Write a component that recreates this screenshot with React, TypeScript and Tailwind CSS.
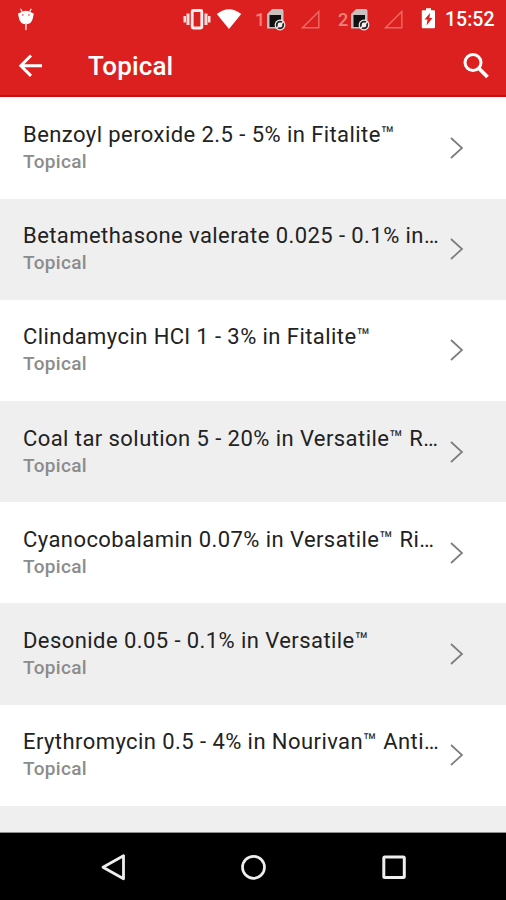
const items = [
  'Benzoyl peroxide 2.5 - 5% in Fitalite™',
  'Betamethasone valerate 0.025 - 0.1% in…',
  'Clindamycin HCl 1 - 3% in Fitalite™',
  'Coal tar solution 5 - 20% in Versatile™ R…',
  'Cyanocobalamin 0.07% in Versatile™ Ri…',
  'Desonide 0.05 - 0.1% in Versatile™',
  'Erythromycin 0.5 - 4% in Nourivan™ Anti…',
];

function DebugIcon() {
  return (
    <svg className="ml-[17px] h-[24px] w-[18px]" viewBox="0 0 18 24" fill="none">
      <path d="M3.800 2.200 5 4.500M14 2.200 12.800 4.500" stroke="#fff" strokeWidth="1.200" strokeLinecap="round" />
      <path d="M1 6.500 3.500 5.500Q8.900 1.800 14.300 5.500L16.800 6.500 16 10.500Q15 17.200 8.900 17.200 2.800 17.200 1.800 10.500Z" fill="#fff" />
      <path d="M8.900 16V22.500" stroke="#ffd9d6" strokeWidth="1.600" strokeLinecap="round" />
      <circle cx="5.800" cy="7.900" r=".9" fill="#e56a66" />
      <circle cx="12" cy="7.900" r=".9" fill="#e56a66" />
    </svg>
  );
}

function VibrateIcon() {
  return (
    <svg className="h-[24px] w-[28px]" viewBox="0 0 28 24" fill="#fff">
      <path d="M.500 9h2.500v6.500H.5zM3.500 6.500h3v11.500h-3zM21.500 6.500h3v11.500h-3zM25 9h2.500v6.500H25z" opacity=".85" />
      <rect x="9.200" y="3.500" width="9.600" height="17.500" rx="1" fill="none" stroke="#fff" strokeOpacity=".93" strokeWidth="2.800" />
    </svg>
  );
}

function WifiIcon() {
  return (
    <svg className="ml-[5px] h-[24px] w-[26px]" viewBox="0 0 26 24" fill="#fff">
      <path d="M.8 7Q13-2.400 25.200 7L13 22Z" />
    </svg>
  );
}

function SimIcon() {
  return (
    <svg className="h-[24px] w-[22px]" viewBox="0 0 22 24">
      <path d="M6.200 2H15.500Q17.500 2 17.500 4V21.500H1V7Z" fill="#c9c0bf" />
      <path d="M3.500 8H15V20H3.500Z" fill="#111" />
      <circle cx="14" cy="18" r="5.400" fill="#f5eeee" />
      <circle cx="14" cy="18" r="3.300" fill="none" stroke="#252525" strokeWidth="1.800" />
      <path d="M10.800 21 17.200 15" stroke="#f5eeee" strokeWidth="1.500" />
    </svg>
  );
}

function SignalIcon() {
  return (
    <svg className="h-[24px] w-[21px]" viewBox="0 0 21 24" fill="none">
      <path d="M2.500 20.700H18.800V4.500Z" stroke="#ec6a62" strokeWidth="1.500" />
    </svg>
  );
}

function BatteryIcon() {
  return (
    <svg className="h-[24px] w-[15px]" viewBox="0 0 15 24">
      <path d="M5 1.200h5v2h3q1 0 1 1v16q0 1-1 1H1.800q-1 0-1-1v-16q0-1 1-1H5Z" fill="#fff" />
      <path d="M9 6 3.500 12.500h3L5.500 18.500l6-7.500h-3Z" fill="#dc2020" />
    </svg>
  );
}

export default function App() {
  return (
    <div className="flex h-[900px] w-[506px] flex-col overflow-hidden bg-white font-['Roboto',sans-serif]">
      <header className="h-[97px] shrink-0 border-b-2 border-[#cc0b10] bg-[#dc2020] text-white">
        <div className="flex h-[37px] items-center">
          <DebugIcon />
          <div className="ml-[148px] flex items-center">
            <VibrateIcon />
            <WifiIcon />
            <span className="ml-[13px] w-[11px] pt-[2px] text-[18px] font-medium leading-6 text-[#f3817b]">1</span>
            <SimIcon />
            <div className="ml-[12px] flex"><SignalIcon /></div>
            <span className="ml-[17px] w-[12px] pt-[2px] text-[18px] font-medium leading-6 text-[#f3817b]">2</span>
            <SimIcon />
            <div className="ml-[11px] flex"><SignalIcon /></div>
            <div className="ml-[17px] flex"><BatteryIcon /></div>
            <span className="ml-[9px] whitespace-nowrap pt-[2px] text-[19.500px] font-medium leading-6">15:52</span>
          </div>
        </div>
        <div className="flex h-[58px] items-center">
          <svg className="ml-[17px] h-[26px] w-[26px] shrink-0" viewBox="0 0 26 26" fill="none" stroke="#fff" strokeWidth="2.900">
            <path d="M25 12.700H3.500M14 2.500 3.800 12.700 14 22.900" />
          </svg>
          <h1 className="ml-[45px] flex-1 text-[26px] font-medium leading-[30px] tracking-[0.15px]">Topical</h1>
          <svg className="mr-[16px] h-[28px] w-[28px]" viewBox="0 0 28 28" fill="none" stroke="#fff">
            <circle cx="11" cy="10.500" r="8" strokeWidth="3" />
            <path d="m16.500 16 9 9" strokeWidth="3.700" />
          </svg>
        </div>
      </header>
      <main className="flex h-[736px] shrink-0 flex-col overflow-hidden pt-[0.400px]">
        {items.map((name) => (
          <div key={name} className="flex h-[101.200px] shrink-0 items-center justify-between bg-white pl-[23px] pr-[42px] even:bg-[#efefef]">
            <div>
              <div className="whitespace-nowrap text-[22px] leading-[27px] tracking-[0.43px] text-[#222]">{name}</div>
              <div className="text-[19px] font-medium leading-[27px] tracking-[0.35px] text-[#8c8c8c]">Topical</div>
            </div>
            <svg className="h-[24px] w-[14px] shrink-0" viewBox="0 0 14 24" fill="none" stroke="#7c7c7c" strokeWidth="1.700">
              <path d="M1 2 12 12 1 22" />
            </svg>
          </div>
        ))}
        <div className="flex-1 border-b border-[#8b8f8b] bg-[#efefef]" />
      </main>
      <nav className="flex flex-1 items-center bg-black pl-[100px]">
        <svg className="h-[28px] w-[28px]" viewBox="0 0 28 28" fill="none" stroke="#eee" strokeWidth="2.800" strokeLinejoin="round">
          <path d="M3 14.300 23.500 2.800V25.800Z" />
        </svg>
        <svg className="ml-[112px] h-[28px] w-[28px]" viewBox="0 0 28 28" fill="none" stroke="#eee" strokeWidth="2.700">
          <circle cx="13.500" cy="14.300" r="11" />
        </svg>
        <svg className="ml-[112px] h-[28px] w-[28px]" viewBox="0 0 28 28" fill="none" stroke="#eee" strokeWidth="3">
          <rect x="3.800" y="4" width="20.500" height="20.500" rx="1" />
        </svg>
      </nav>
    </div>
  );
}
